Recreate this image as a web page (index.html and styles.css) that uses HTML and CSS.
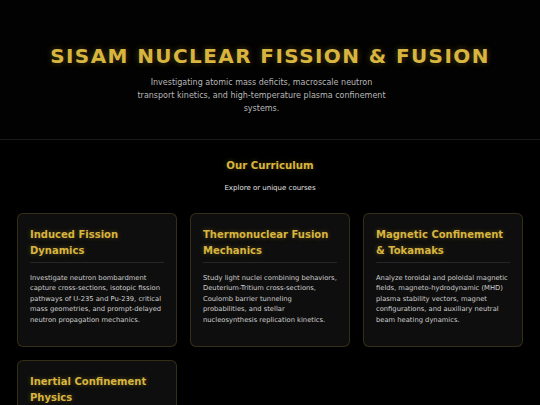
FILE: index.html
```html
<!DOCTYPE html>
<html lang="en">
<head>
<meta charset="utf-8">
<title>SISAM Nuclear Fission &amp; Fusion</title>
<link rel="stylesheet" href="styles.css">
</head>
<body>
<header class="hero">
  <h1 class="hero-title">SISAM NUCLEAR FISSION &amp; FUSION</h1>
  <p class="hero-sub">Investigating atomic mass deficits, macroscale neutron transport kinetics, and high-temperature plasma confinement systems.</p>
</header>
<main class="curriculum">
  <h2 class="section-title">Our Curriculum</h2>
  <p class="section-sub">Explore or unique courses</p>
  <div class="grid">
    <article class="card">
      <h3 class="card-title">Induced Fission Dynamics</h3>
      <p class="card-text">Investigate neutron bombardment capture cross-sections, isotopic fission pathways of U-235 and Pu-239, critical mass geometries, and prompt-delayed neutron propagation mechanics.</p>
    </article>
    <article class="card">
      <h3 class="card-title">Thermonuclear Fusion Mechanics</h3>
      <p class="card-text">Study light nuclei combining behaviors, Deuterium-Tritium cross-sections, Coulomb barrier tunneling probabilities, and stellar nucleosynthesis replication kinetics.</p>
    </article>
    <article class="card">
      <h3 class="card-title">Magnetic Confinement &amp; Tokamaks</h3>
      <p class="card-text">Analyze toroidal and poloidal magnetic fields, magneto-hydrodynamic (MHD) plasma stability vectors, magnet configurations, and auxiliary neutral beam heating dynamics.</p>
    </article>
    <article class="card">
      <h3 class="card-title">Inertial Confinement Physics</h3>
      <p class="card-text">Examine laser-driven implosion of fuel pellets, hohlraum radiation drive symmetry, Rayleigh-Taylor instabilities, and ignition threshold criteria.</p>
    </article>
  </div>
</main>
</body>
</html>
```
FILE: styles.css
```css
* { box-sizing: border-box; }
html, body { margin: 0; padding: 0; background: #000; }
body {
  font-family: "DejaVu Sans", Verdana, sans-serif;
  color: #ddd;
}
.hero {
  padding: 44px 17px 24px;
  text-align: center;
  border-bottom: 1px solid #1a1a1a;
  background: #020202;
}
.hero-title {
  margin: 0;
  font-size: 20px;
  line-height: 24px;
  font-weight: bold;
  letter-spacing: 1.4px;
  color: #d8b53e;
  text-shadow: 0 0 6px rgba(212, 175, 55, 0.35);
}
.hero-sub {
  margin: 8px auto 0;
  max-width: 270px;
  padding-right: 17px;
  font-size: 8px;
  line-height: 13px;
  color: #b8b8b8;
}
.curriculum {
  padding: 18px 17px 20px;
}
.section-title {
  margin: 0;
  text-align: center;
  font-size: 10.2px;
  line-height: 16px;
  font-weight: bold;
  color: #d8b53e;
  text-shadow: 0 0 5px rgba(212, 175, 55, 0.35);
}
.section-sub {
  margin: 9px 0 0;
  text-align: center;
  font-size: 7px;
  line-height: 10.5px;
  color: #e2e2e2;
}
.grid {
  margin-top: 19px;
  display: grid;
  grid-template-columns: repeat(3, 1fr);
  gap: 13px;
}
.card {
  background: #0e0e0e;
  border: 1px solid rgba(212, 175, 55, 0.2);
  border-radius: 6px;
  padding: 13px 12px 21px;
}
.card-title {
  margin: 0;
  padding-bottom: 3px;
  border-bottom: 1px solid #262626;
  font-size: 10px;
  line-height: 16px;
  font-weight: bold;
  color: #d8b53e;
  text-shadow: 0 0 5px rgba(212, 175, 55, 0.35);
}
.card-text {
  margin: 10px 0 0;
  font-size: 6.75px;
  line-height: 10.5px;
  color: #cfcfcf;
}
```
